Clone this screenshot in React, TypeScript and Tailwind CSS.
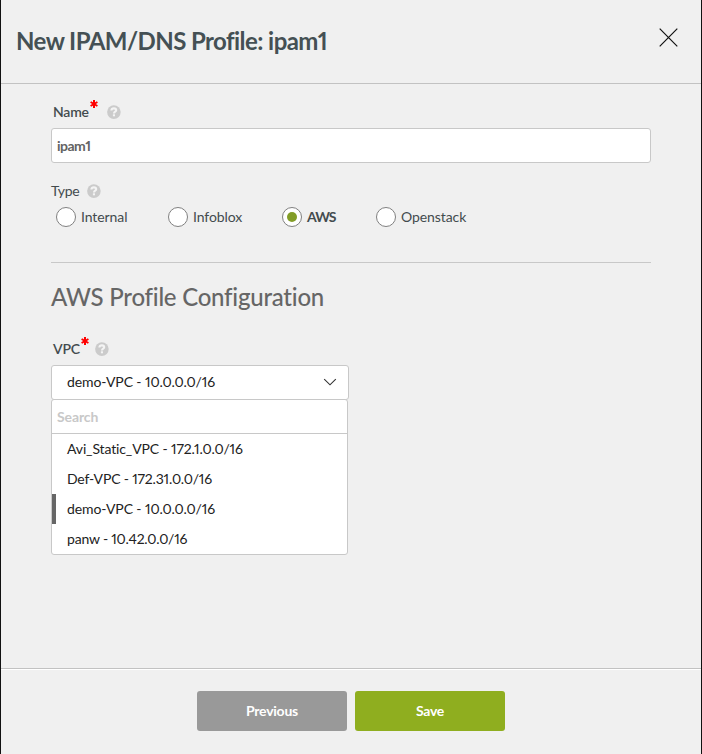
import React from "react";

function Help() {
  return (
    <svg className="block h-[14px] w-[14px] shrink-0" viewBox="0 0 14 14">
      <circle cx="6.9" cy="7.1" r="6.8" fill="#cbcbcb" />
      <path d="M4.4 5.5C4.5 3.9 5.5 3.4 6.9 3.4c1.4 0 2.3.7 2.3 1.9 0 1.5-2.2 1.4-2.2 3.1" fill="none" stroke="#f4f4f4" strokeWidth="2.1" />
      <rect x="5.9" y="9.3" width="2.1" height="2" fill="#f4f4f4" />
    </svg>
  );
}

function Star() {
  return (
    <svg className="block h-[8px] w-[8px] shrink-0" viewBox="0 0 8 8">
      <path d="M4 0v8M0.6 2l6.8 4M7.4 2L0.6 6" fill="none" stroke="#ff0000" strokeWidth="2" />
    </svg>
  );
}

function Radio({ label, checked, className }: { label: string; checked?: boolean; className: string }) {
  return (
    <label className={`flex h-5 items-center ${className}`}>
      <span className="mr-[5px] flex h-5 w-5 shrink-0 items-center justify-center rounded-full border border-[#808080] bg-white">
        {checked && <span className="h-[10px] w-[10px] rounded-full bg-[#829d27]" />}
      </span>
      <span className={checked ? "font-bold tracking-[-0.9px]" : "tracking-[-0.08px]"}>{label}</span>
    </label>
  );
}

const options = [
  { label: "Avi_Static_VPC - 172.1.0.0/16", spacing: "tracking-[-0.13px]" },
  { label: "Def-VPC - 172.31.0.0/16", spacing: "tracking-[-0.18px]" },
  { label: "demo-VPC - 10.0.0.0/16", spacing: "tracking-[-0.1px]", selected: true },
  { label: "panw - 10.42.0.0/16", spacing: "tracking-[-0.2px]" },
];

export default function App() {
  return (
    <div className="flex h-[754px] w-[702px] flex-col overflow-hidden border-x border-[#111] bg-[#f0f0f0] font-['Lato',sans-serif] text-[14px] leading-5 whitespace-nowrap text-[#434b4e] proportional-nums">
      <header className="flex h-[84px] shrink-0 items-start justify-between border-b border-[#c2c2c2] pr-[23px] pl-[15px]">
        <h1 className="mt-[25px] text-[24px] leading-8 font-bold tracking-[-0.57px] text-[#455054]">New IPAM/DNS Profile: ipam1</h1>
        <svg className="mt-7 h-[19px] w-[19px]" viewBox="0 0 19 19">
          <path d="M.7 .7l17.6 17.6M18.3 .7L.7 18.3" fill="none" stroke="#111" strokeWidth="1.2" />
        </svg>
      </header>
      <main className="flex h-[584px] shrink-0 flex-col px-[50px] pt-[18px]">
        <div className="flex h-5 items-center pl-[2px] font-semibold tracking-[-0.2px]">
          <span className="w-[37px]">Name</span>
          <span className="mt-[-16px] mr-[9px]"><Star /></span>
          <Help />
        </div>
        <div className="mt-[6px] flex h-[35px] w-[600px] shrink-0 items-center rounded-[3px] border border-[#c8c8c8] bg-white pl-[5px] font-bold tracking-[-0.5px] text-[#636363]">ipam1</div>
        <div className="mt-[18px] flex h-5 items-center">
          <span className="w-[36px] tracking-[-0.3px]">Type</span>
          <Help />
        </div>
        <div className="mt-[6px] flex pl-[5px]">
          <Radio label="Internal" className="w-[112px]" />
          <Radio label="Infoblox" className="w-[114px]" />
          <Radio label="AWS" checked className="w-[94px]" />
          <Radio label="Openstack" className="w-[100px]" />
        </div>
        <div className="mt-[35px] w-[600px] border-t border-[#c8c8c8]" />
        <h2 className="mt-[18px] text-[24px] leading-8 font-medium tracking-[-0.24px] text-[#666]">AWS Profile Configuration</h2>
        <div className="mt-[26px] flex h-5 items-center pl-[2px] font-semibold tracking-[-0.2px]">
          <span className="w-[28px]">VPC</span>
          <span className="mt-[-16px] mr-[6px]"><Star /></span>
          <Help />
        </div>
        <div className="mt-[6px] flex h-[35px] w-[298px] shrink-0 items-center justify-between rounded-[3px] border border-[#c8c8c8] bg-white pr-[11px] pl-[15px] text-[#222]">
          <span className="mt-[-2px] tracking-[-0.1px]">demo-VPC - 10.0.0.0/16</span>
          <svg className="mt-[-1px] h-[8px] w-[14px]" viewBox="0 0 14 8">
            <path d="M1.2 1.2L7 6.8l5.8-5.6" fill="none" stroke="#333" strokeWidth="1.15" />
          </svg>
        </div>
        <div className="mt-[-1px] w-[297px] shrink-0 rounded-[3px] border border-[#c8c8c8] bg-white text-[#222]">
          <div className="flex h-[34px] items-center border-b border-[#c8c8c8] pl-[5px] font-bold tracking-[-0.1px] text-[#c8c8c8]">Search</div>
          {options.map((o) => (
            <div key={o.label} className={`flex h-[30px] items-center border-l-4 pl-[11px] ${o.selected ? "border-[#666]" : "border-transparent"}`}>
              <span className={o.spacing}>{o.label}</span>
            </div>
          ))}
        </div>
      </main>
      <footer className="flex h-[86px] shrink-0 justify-center gap-2 border-t border-[#c2c2c2] pt-[22px] font-bold text-white shadow-[inset_0_1px_0_#fff]">
        <button className="h-10 w-[150px] rounded-[3px] bg-[#999] tracking-[-0.25px]">Previous</button>
        <button className="h-10 w-[150px] rounded-[3px] bg-[#8fae1f] tracking-[-0.3px]">Save</button>
      </footer>
    </div>
  );
}
